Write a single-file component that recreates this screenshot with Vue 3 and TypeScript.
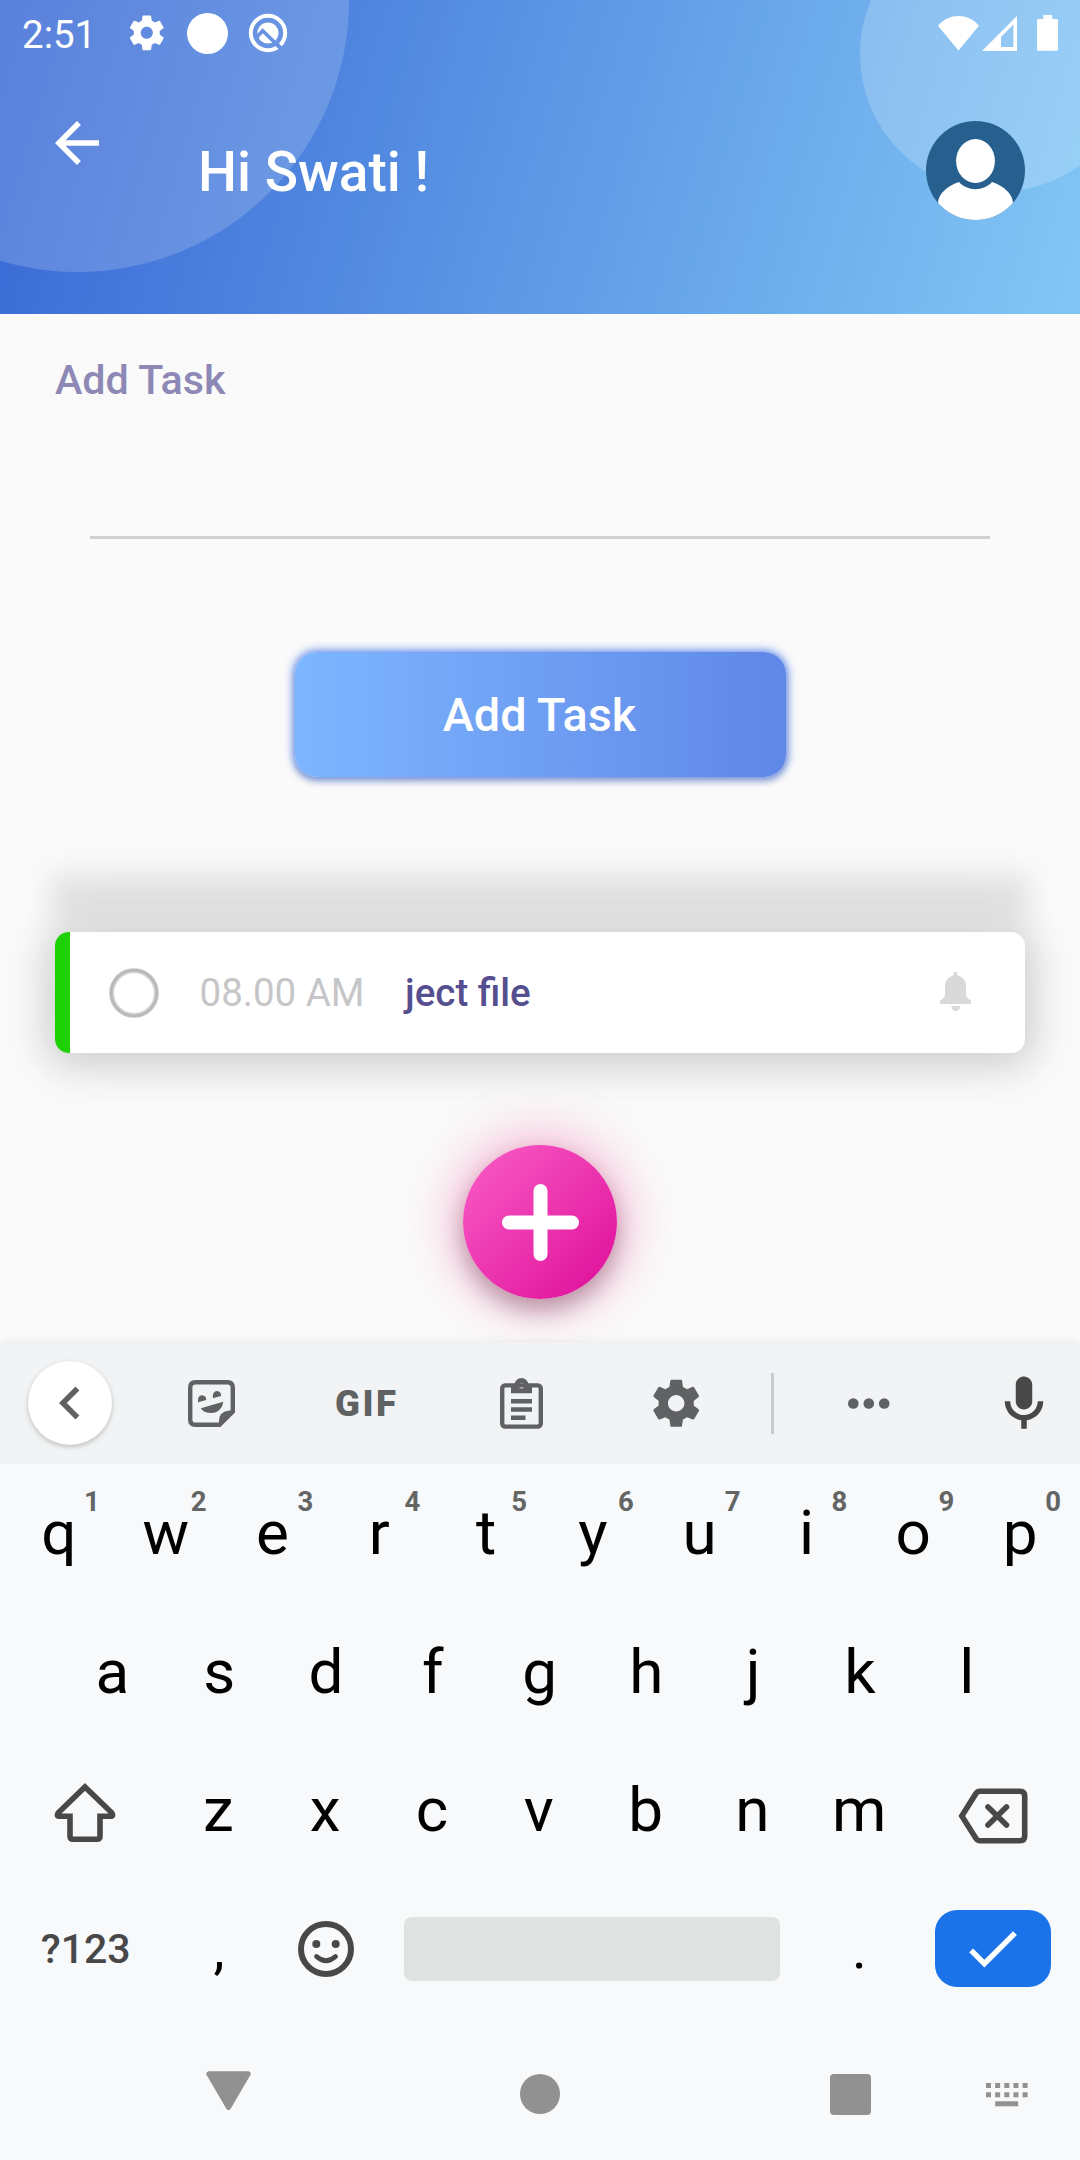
<script setup lang="ts">
interface HintKey {
  letter: string
  hint: string
}

const topRow: HintKey[] = 'qwertyuiop'.split('').map((letter, i) => ({
  letter,
  hint: String((i + 1) % 10),
}))
const homeRow: string[] = 'asdfghjkl'.split('')
const bottomRow: string[] = 'zxcvbnm'.split('')
const dotColumns: number[] = [0, 1, 2, 3, 4]
</script>

<template>
  <div class="screen">
    <header class="header">
      <div class="bubble bubble-left"></div>
      <div class="bubble bubble-right"></div>

      <div class="status-bar">
        <span class="clock">2:51</span>
        <svg class="status-gear" viewBox="0 0 24 24">
          <path d="M19.43 12.98c.04-.32.07-.64.07-.98s-.03-.66-.07-.98l2.11-1.65c.19-.15.24-.42.12-.64l-2-3.46c-.12-.22-.39-.3-.61-.22l-2.49 1c-.52-.4-1.08-.73-1.69-.98l-.38-2.65C14.46 2.18 14.25 2 14 2h-4c-.25 0-.46.18-.49.42l-.38 2.65c-.61.25-1.17.59-1.69.98l-2.49-1c-.23-.09-.49 0-.61.22l-2 3.46c-.13.22-.07.49.12.64l2.11 1.65c-.04.32-.07.65-.07.98s.03.66.07.98l-2.11 1.65c-.19.15-.24.42-.12.64l2 3.46c.12.22.39.3.61.22l2.49-1c.52.4 1.08.73 1.69.98l.38 2.65c.03.24.24.42.49.42h4c.25 0 .46-.18.49-.42l.38-2.65c.61-.25 1.17-.59 1.69-.98l2.49 1c.23.09.49 0 .61-.22l2-3.46c.12-.22.07-.49-.12-.64l-2.11-1.65zM12 15.5c-1.93 0-3.5-1.57-3.5-3.5s1.57-3.5 3.5-3.5 3.5 1.57 3.5 3.5-1.57 3.5-3.5 3.5z" />
        </svg>
        <span class="status-dot"></span>
        <svg class="status-q" viewBox="0 0 40 40">
          <mask id="q-cut">
            <rect width="40" height="40" fill="#fff" />
            <path d="M7.500 25.500 14.700 17.800 31 33.600" fill="none" stroke="#000" stroke-width="3.600" />
            <path d="M28 30.500 38 40.500" stroke="#000" stroke-width="4" />
          </mask>
          <g mask="url(#q-cut)">
            <circle cx="20" cy="20" r="17.200" fill="none" stroke="#fff" stroke-width="4" />
            <circle cx="20" cy="20" r="10.600" fill="#fff" />
          </g>
        </svg>
        <svg class="status-wifi" viewBox="0 0 41 35">
          <path d="M0 9.700C5.500 3.300 12.600 0 20.500 0S35.500 3.300 41 9.700L20.500 34.500z" />
        </svg>
        <svg class="status-signal" viewBox="0 0 35 35">
          <path fill-rule="evenodd" d="M0 35 35 0V35zM19 31H31.400V8.600L19 21z" />
        </svg>
        <svg class="status-battery" viewBox="0 0 21 36">
          <path d="M6.300 0h9v4H19.500q1.500 0 1.500 1.500V34.200q0 1.500-1.500 1.500H1.500Q0 35.700 0 34.200V5.500Q0 4 1.500 4H6.300z" />
        </svg>
      </div>

      <div class="title-bar">
        <svg class="back-arrow" viewBox="0 0 24 24">
          <path d="M20 11H7.830l5.590-5.590L12 4l-8 8 8 8 1.410-1.410L7.830 13H20v-2z" />
        </svg>
        <h1 class="title">Hi Swati !</h1>
        <svg class="avatar" viewBox="0 0 99 99">
          <clipPath id="avatar-clip"><circle cx="49.500" cy="49.500" r="49.500" /></clipPath>
          <g clip-path="url(#avatar-clip)">
            <rect width="99" height="99" fill="#27608f" />
            <ellipse cx="49.500" cy="40" rx="19.400" ry="22" fill="#fff" />
            <path d="M33 61C41 70.500 58 70.500 66 61C77 64.500 87 73 87 82V99H12V82C12 73 22 64.500 33 61z" fill="#fff" />
          </g>
        </svg>
      </div>
    </header>

    <main class="content">
      <h2 class="section-label">Add Task</h2>
      <div class="task-input"></div>
      <button class="add-button">Add Task</button>

      <div class="collapsed-task"></div>
      <div class="task-card">
        <svg class="task-ring" viewBox="0 0 50 50">
          <circle cx="25" cy="25" r="22.400" fill="none" stroke="#dadada" stroke-width="5.200" />
          <circle cx="25" cy="25" r="22.800" fill="none" stroke="#b9b9b9" stroke-width="3" />
        </svg>
        <span class="task-time">08.00 AM</span>
        <span class="task-name">ject file</span>
        <svg class="task-bell" viewBox="0 0 31 39">
          <path d="M13.800 0h3.400v3.200C22.500 4.500 26 8.500 26 14v8c0 2.500 1.500 4 3 5.500L31 28v4H0v-4l2-.5C3.500 26 5 24.500 5 22v-8C5 8.500 8.500 4.500 13.800 3.200z" />
          <path d="M11.500 34h8.500c0 3.200-1.500 5-4.200 5s-4.300-1.800-4.300-5z" />
        </svg>
      </div>

      <button class="fab">
        <svg viewBox="0 0 77 77">
          <path d="M38.500 7v63M7 38.500h63" />
        </svg>
      </button>
    </main>

    <section class="keyboard">
      <div class="toolbar">
        <div class="tool-back">
          <svg viewBox="0 0 24 24"><path d="M15.410 7.410 14 6l-6 6 6 6 1.410-1.410L10.830 12z" /></svg>
        </div>
        <svg class="tool-sticker" viewBox="0 0 47 47">
          <path d="M7.500 2.200H39.500Q44.800 2.200 44.800 7.500V31.500L31.500 44.800H7.500Q2.200 44.800 2.200 39.500V7.500Q2.200 2.200 7.500 2.200z" fill="none" stroke="#606163" stroke-width="4.400" />
          <path d="M46 30.500H41.500Q31 31.500 31 41V46z" />
          <path d="M10 22.200Q9.200 15.500 14 15.200Q18.300 15.500 18.200 20z" />
          <path d="M24.800 18.200Q24.300 11.300 29 11.100Q33.300 11.400 33 16z" />
          <path d="M12.800 28.200 35.200 21.700C34.500 28.500 29.500 33 23.500 33C18.500 33 15 31.500 12.800 28.200z" />
        </svg>
        <span class="tool-gif">GIF</span>
        <svg class="tool-clipboard" viewBox="0 0 43 51">
          <rect x="2.200" y="7.400" width="38.600" height="41.200" rx="3" fill="none" stroke="#606163" stroke-width="4.400" />
          <path fill-rule="evenodd" d="M11 15.300V7H14C15 2.800 18 0 21.500 0S28 2.800 29 7H32V15.300zM21.500 5.100a2.700 2.700 0 1 0 0 5.400a2.700 2.700 0 1 0 0-5.400z" />
          <path d="M11 21h21v4.400H11zM11 29.300h21v4.400H11zM11 37.600h14.500V42H11z" />
        </svg>
        <svg class="tool-gear" viewBox="0 0 24 24">
          <path d="M19.430 12.980c.04-.32.07-.64.07-.98s-.03-.66-.07-.98l2.110-1.650c.19-.15.24-.42.12-.64l-2-3.460c-.12-.22-.39-.3-.61-.22l-2.490 1c-.52-.4-1.080-.73-1.690-.98l-.38-2.650C14.460 2.180 14.250 2 14 2h-4c-.25 0-.46.18-.49.42l-.38 2.650c-.61.25-1.170.59-1.690.98l-2.490-1c-.23-.09-.49 0-.61.22l-2 3.460c-.13.22-.07.49.12.64l2.110 1.650c-.04.32-.07.65-.07.98s.03.66.07.98l-2.110 1.650c-.19.15-.24.42-.12.64l2 3.460c.12.22.39.3.61.22l2.490-1c.52.4 1.080.73 1.690.98l.38 2.650c.03.24.24.42.49.42h4c.25 0 .46-.18.49-.42l.38-2.650c.61-.25 1.170-.59 1.690-.98l2.490 1c.23.09.49 0 .61-.22l2-3.460c.12-.22.07-.49-.12-.64l-2.110-1.650zM12 15.500c-1.930 0-3.500-1.570-3.500-3.500s1.570-3.500 3.500-3.500 3.500 1.570 3.500 3.500-1.570 3.500-3.500 3.500z" />
        </svg>
        <span class="tool-divider"></span>
        <svg class="tool-more" viewBox="0 0 42 11">
          <circle cx="5.300" cy="5.500" r="5.300" />
          <circle cx="20.800" cy="5.500" r="5.300" />
          <circle cx="36.200" cy="5.500" r="5.300" />
        </svg>
        <svg class="tool-mic" viewBox="0 0 24 24">
          <path d="M12 14c1.660 0 3-1.340 3-3V5c0-1.660-1.340-3-3-3S9 3.340 9 5v6c0 1.660 1.340 3 3 3zM17 11c0 2.760-2.240 5-5 5s-5-2.240-5-5H5c0 3.530 2.610 6.430 6 6.920V21h2v-3.080c3.390-.49 6-3.390 6-6.920h-2z" />
        </svg>
      </div>

      <div class="key-row row-top">
        <div v-for="key in topRow" :key="key.letter" class="key">
          {{ key.letter }}<sup class="hint">{{ key.hint }}</sup>
        </div>
      </div>
      <div class="key-row row-home">
        <div v-for="letter in homeRow" :key="letter" class="key">{{ letter }}</div>
      </div>
      <div class="key-row row-bottom">
        <div class="wide-key">
          <svg class="icon-shift" viewBox="0 0 62 60">
            <path d="M31 4 57.500 29.500Q60 33 57 33.200H46V53Q46 56.200 43 56.200H19Q16 56.200 16 53V33.200H5Q2 33 4.500 29.500z" />
          </svg>
        </div>
        <div v-for="letter in bottomRow" :key="letter" class="key">{{ letter }}</div>
        <div class="wide-key">
          <svg class="icon-backspace" viewBox="0 0 70 56">
            <path d="M22 3.200H62Q66.700 3.200 66.700 8V48Q66.700 52.700 62 52.700H22Q19.500 52.700 18 50.500L3.800 28 18 5.400Q19.500 3.200 22 3.200z" />
            <path d="M30 19 48.500 37M48.500 19 30 37" />
          </svg>
        </div>
      </div>
      <div class="key-row row-space">
        <div class="wide-key symbols">?123</div>
        <div class="key punct">,</div>
        <div class="key">
          <svg class="icon-emoji" viewBox="0 0 56 56">
            <circle cx="28" cy="28" r="25" fill="none" stroke="#484848" stroke-width="6" />
            <circle cx="18.300" cy="23" r="4" />
            <circle cx="37.700" cy="23" r="4" />
            <path d="M18.500 35.500Q28 44 37.500 35.500" fill="none" stroke="#484848" stroke-width="4.800" stroke-linecap="round" />
          </svg>
        </div>
        <div class="space-bar"></div>
        <div class="key punct period">.</div>
        <div class="enter-key">
          <svg viewBox="0 0 24 24"><path d="M9 16.170 4.830 12l-1.420 1.410L9 19 21 7l-1.410-1.410z" /></svg>
        </div>
      </div>

      <nav class="nav-bar">
        <svg class="nav-back" viewBox="0 0 45 40">
          <path d="M2.800 2.800H42.200L22.500 36.500z" />
        </svg>
        <span class="nav-home"></span>
        <span class="nav-recent"></span>
        <svg class="nav-keyboard" viewBox="0 0 43 24">
          <g v-for="c in dotColumns" :key="c">
            <rect :x="c * 9.15" y="0" width="5" height="5" />
            <rect :x="c * 9.15" y="9.300" width="5" height="5" />
          </g>
          <rect x="9.200" y="18.300" width="23" height="5" />
        </svg>
      </nav>
    </section>
  </div>
</template>

<style>
body {
  margin: 0;
}
</style>

<style scoped>
.screen {
  width: 1080px;
  height: 2160px;
  overflow: hidden;
  display: flex;
  flex-direction: column;
  background: #fafafa;
  font-family: Roboto, "Liberation Sans", sans-serif;
}
svg {
  display: block;
  flex: none;
}
button {
  border: 0;
  padding: 0;
  font-family: inherit;
}
h1,
h2 {
  margin: 0;
  font-weight: 500;
}

/* header */
.header {
  position: relative;
  height: 313.5px;
  flex: none;
  overflow: hidden;
  background: linear-gradient(106.200deg, #3867d5, #81c7f5);
}
.bubble {
  position: absolute;
  border-radius: 50%;
  background: rgba(255, 255, 255, 0.17);
}
.bubble-left {
  width: 543px;
  height: 543px;
  left: -194px;
  top: -271.500px;
}
.bubble-right {
  width: 276px;
  height: 276px;
  left: 860px;
  top: -84px;
  background: rgba(255, 255, 255, 0.2);
}
.status-bar {
  position: relative;
  display: flex;
  align-items: center;
  height: 66px;
  padding: 0 22px;
  box-sizing: border-box;
  fill: #fff;
}
.clock {
  width: 103.500px;
  font-size: 38.500px;
  line-height: 66px;
  color: #fff;
  padding-top: 3px;
}
.status-gear {
  width: 41.600px;
  height: 41.600px;
}
.status-dot {
  width: 41px;
  height: 41px;
  margin-left: 19.700px;
  border-radius: 50%;
  background: #fff;
}
.status-q {
  width: 40px;
  height: 40px;
  margin-left: 20.400px;
}
.status-wifi {
  width: 41px;
  height: 35px;
  margin-left: auto;
}
.status-signal {
  width: 35px;
  height: 35px;
  margin-left: 3px;
}
.status-battery {
  width: 21px;
  height: 36px;
  margin-left: 20px;
}
.title-bar {
  position: relative;
  display: flex;
  align-items: flex-start;
  padding: 44px 55px 0 44px;
}
.back-arrow {
  width: 66px;
  height: 66px;
  fill: #fff;
}
.title {
  margin: 30px 0 0 88px;
  flex: 1;
  font-size: 55px;
  line-height: 64px;
  color: #fff;
}
.avatar {
  width: 99px;
  height: 99px;
  margin-top: 11px;
}

/* content */
.content {
  height: 1029.500px;
  flex: none;
  display: flex;
  flex-direction: column;
  align-items: center;
  box-sizing: border-box;
  padding: 42.500px 55px 0;
}
.section-label {
  align-self: stretch;
  font-size: 41.250px;
  line-height: 48px;
  color: #8d88b5;
}
.task-input {
  width: 900px;
  height: 132px;
  border-bottom: 3px solid #cfd1d0;
}
.add-button {
  width: 491px;
  height: 125px;
  margin-top: 113px;
  padding: 1px 1px 0 0;
  border-radius: 22px;
  background: linear-gradient(90deg, #7eb6ff, #5f87e7);
  box-shadow: 0 0 9px 2px rgba(80, 125, 235, 0.85), 0 4px 7px rgba(0, 0, 0, 0.2);
  font-size: 46.750px;
  font-weight: 500;
  line-height: 54px;
  color: #fff;
}
.collapsed-task {
  width: 934px;
  height: 0;
  margin: 120px 0 35px;
  box-shadow: 0 0 24px 22px rgba(0, 0, 0, 0.075), 0 0 52px 26px rgba(0, 0, 0, 0.035);
}
.task-card {
  position: relative;
  width: 970px;
  height: 121px;
  flex: none;
  display: flex;
  align-items: center;
  box-sizing: border-box;
  padding: 0 54px 0 39px;
  border-left: 15px solid #1dd105;
  border-radius: 14px;
  background: #fff;
  box-shadow: 0 4px 36px 9px rgba(0, 0, 0, 0.145), 0 8px 70px 8px rgba(0, 0, 0, 0.045);
}
.task-ring {
  width: 50px;
  height: 50px;
}
.task-time {
  width: 205.500px;
  margin-left: 40.500px;
  font-size: 38.500px;
  line-height: 45px;
  color: #c6c6c8;
}
.task-name {
  flex: 1;
  font-size: 38.500px;
  font-weight: 500;
  line-height: 45px;
  color: #554e8f;
}
.task-bell {
  width: 31px;
  height: 39px;
  margin-top: -1.500px;
  fill: #d9d9d9;
}
.fab {
  width: 154px;
  height: 154px;
  flex: none;
  display: flex;
  align-items: center;
  justify-content: center;
  margin-top: 92px;
  border-radius: 50%;
  background: linear-gradient(135deg, #f857c3 8%, #e0139c 92%);
  box-shadow: 0 0 52px 8px rgba(240, 60, 140, 0.38), 0 11px 22px rgba(0, 0, 0, 0.3);
}
.fab svg {
  width: 77px;
  height: 77px;
  stroke: #fff;
  stroke-width: 14px;
  stroke-linecap: round;
}

/* keyboard */
.keyboard {
  position: relative;
  flex: 1;
  background: #f8f9fb;
  box-shadow: 0 -1px 8px rgba(0, 0, 0, 0.07);
}
.toolbar {
  display: flex;
  align-items: center;
  height: 121px;
  padding-left: 28px;
  background: #f1f3f4;
  fill: #606163;
}
.tool-back {
  width: 84px;
  height: 84px;
  margin-top: -1px;
  display: flex;
  align-items: center;
  justify-content: center;
  border-radius: 50%;
  background: #fff;
  box-shadow: 0 2px 5px rgba(0, 0, 0, 0.22);
}
.tool-back svg {
  width: 66px;
  height: 66px;
}
.tool-sticker {
  width: 47px;
  height: 47px;
  margin-left: 76px;
}
.tool-gif {
  width: 66px;
  margin-left: 100px;
  font-size: 36.500px;
  font-weight: 900;
  line-height: 42px;
  letter-spacing: 2.500px;
  color: #606163;
  padding-top: 1px;
}
.tool-clipboard {
  width: 43px;
  height: 51px;
  margin-left: 99px;
}
.tool-gear {
  width: 56.400px;
  height: 56.400px;
  margin-left: 105px;
}
.tool-divider {
  width: 2.700px;
  height: 61px;
  margin-left: 66.700px;
  background: #c9cbcd;
}
.tool-more {
  width: 42px;
  height: 11px;
  margin-left: 74px;
}
.tool-mic {
  width: 66px;
  height: 66px;
  margin-left: 101.500px;
  fill: #484848;
}
.key-row {
  display: flex;
  align-items: center;
  height: 138.500px;
}
.row-top {
  padding: 0 5.500px;
}
.row-home {
  padding: 0 59px;
}
.key {
  position: relative;
  width: 106.800px;
  flex: none;
  display: flex;
  justify-content: center;
  font-size: 62px;
  line-height: 138px;
  color: #000;
}
.hint {
  position: absolute;
  left: 78.500px;
  top: 22px;
  font-size: 27.500px;
  font-weight: 700;
  line-height: 32px;
  color: #636665;
}
.wide-key {
  width: 165px;
  flex: none;
  display: flex;
  align-items: center;
  justify-content: center;
}
.row-bottom .wide-key:first-child {
  padding-left: 4px;
  width: 161px;
}
.icon-shift,
.icon-backspace {
  fill: none;
  stroke: #484848;
  stroke-width: 5.600px;
}
.icon-shift {
  width: 62px;
  height: 60px;
  margin-top: 5px;
}
.icon-backspace {
  width: 70px;
  height: 56px;
  margin: 11px 0 0 -5px;
  stroke-linecap: round;
}
.symbols {
  padding-left: 6px;
  width: 159.500px;
  font-size: 41px;
  font-weight: 500;
  color: #484848;
}
.row-space {
  padding-top: 1px;
  height: 137.500px;
}
.row-space .punct {
  font-size: 56px;
}
.icon-emoji {
  width: 56px;
  height: 56px;
  fill: #484848;
}
.space-bar {
  width: 376px;
  height: 64px;
  margin-left: 25px;
  border-radius: 8px;
  background: #e0e2e1;
}
.period {
  margin-left: 26px;
}
.enter-key {
  width: 116px;
  height: 77px;
  margin: -1px 0 0 22px;
  display: flex;
  align-items: center;
  justify-content: center;
  border-radius: 22px;
  background: #1b73e9;
}
.enter-key svg {
  width: 65px;
  height: 65px;
  fill: #fff;
}
.nav-bar {
  display: flex;
  align-items: center;
  height: 152px;
  fill: #919191;
}
.nav-back {
  width: 45px;
  height: 40px;
  margin: -6px 0 0 206px;
  stroke: #919191;
  stroke-width: 5px;
  stroke-linejoin: round;
}
.nav-home {
  width: 40px;
  height: 40px;
  margin-left: 269px;
  border-radius: 50%;
  background: #919191;
}
.nav-recent {
  width: 41px;
  height: 41px;
  margin: 1px 0 0 269.500px;
  border-radius: 4px;
  background: #919191;
}
.nav-keyboard {
  width: 43px;
  height: 24px;
  margin: 1px 0 0 115px;
}
</style>
